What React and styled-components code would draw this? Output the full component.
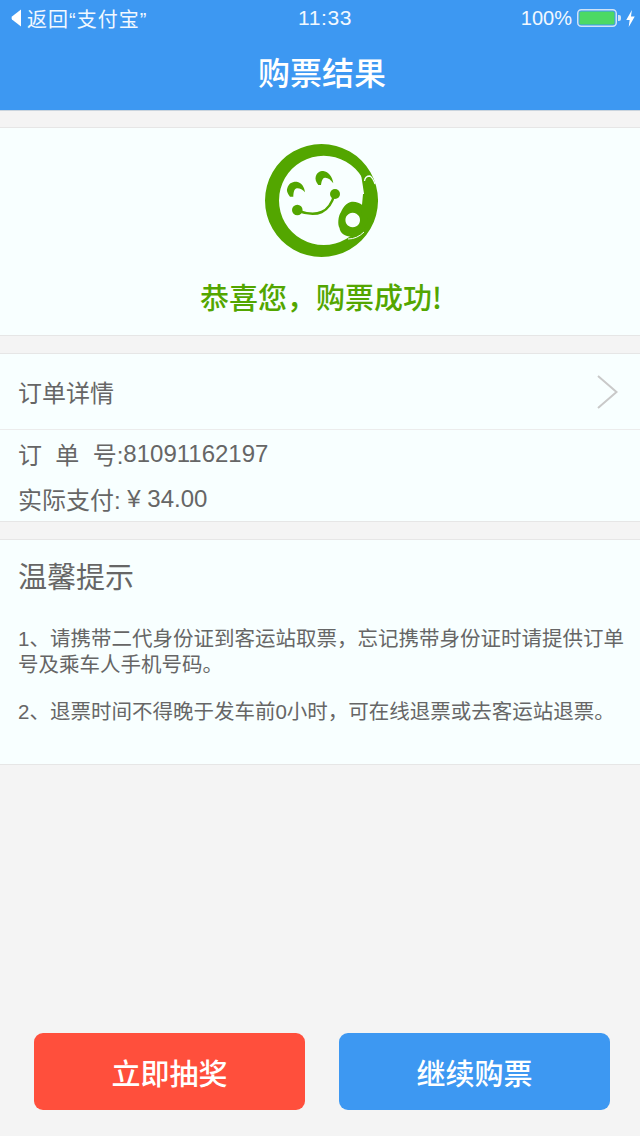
import React from 'react';
import styled, { createGlobalStyle } from 'styled-components';

const GlobalStyle = createGlobalStyle`
  html, body {
    margin: 0;
    padding: 0;
    background: #f4f4f4;
  }
  * {
    box-sizing: border-box;
  }
`;

const FONT = `"Liberation Sans", "Noto Sans CJK SC", sans-serif`;
const CJK_FONT = `"Noto Sans CJK SC", sans-serif`;

const Page = styled.div`
  width: 640px;
  height: 1136px;
  display: flex;
  flex-direction: column;
  background: #f4f4f4;
  font-family: ${FONT};
  overflow: hidden;
`;

const Header = styled.header`
  height: 111px;
  flex: none;
  background: #3d98f2;
  border-bottom: 1px solid #c9d4de;
  color: #fff;
`;

const StatusBar = styled.div`
  height: 36px;
  padding: 0 5px 0 11px;
  display: grid;
  grid-template-columns: 1fr auto 1fr;
  align-items: center;
  color: #f2f8ff;
`;

const BackLink = styled.div`
  display: flex;
  align-items: center;
  gap: 6px;
  font-size: 20px;
  letter-spacing: 1px;
`;

const Clock = styled.div`
  font-size: 21px;
  letter-spacing: 0.6px;
  padding-left: 4px;
`;

const StatusRight = styled.div`
  display: flex;
  align-items: center;
  justify-content: flex-end;
  gap: 5px;
  font-size: 20px;
`;

const Title = styled.h1`
  margin: 0;
  height: 72px;
  display: flex;
  align-items: center;
  justify-content: center;
  font-size: 32px;
  font-weight: 500;
  padding: 0 0 2px 4px;
`;

const Card = styled.section`
  margin-top: ${(p) => p.$gap}px;
  background: #f8ffff;
  border-top: 1px solid #e6e6e6;
  border-bottom: 1px solid #e6e6e6;
`;

const Result = styled(Card)`
  height: 209px;
  display: flex;
  flex-direction: column;
  align-items: center;
  padding: 16px 0 0 2px;
`;

const ResultText = styled.div`
  margin-top: 19px;
  font-family: ${CJK_FONT};
  font-size: 29px;
  line-height: 40px;
  font-weight: 500;
  color: #53a600;
`;

const DetailRow = styled.div`
  height: 76px;
  padding: 0 22px 0 18px;
  display: flex;
  align-items: center;
  justify-content: space-between;
  border-bottom: 1px solid #ececec;
  font-size: 24px;
  color: #666;
`;

const InfoList = styled.div`
  padding-top: 1px;
`;

const InfoLine = styled.div`
  height: 45px;
  padding-left: 18px;
  display: flex;
  align-items: center;
  font-size: 24px;
  color: #666;
`;

const Label = styled.span`
  white-space: pre;
`;

const Tips = styled(Card)`
  height: 226px;
  padding: 0 8px 0 18px;
`;

const TipsTitle = styled.h2`
  margin: 0;
  height: 70px;
  display: flex;
  align-items: center;
  font-size: 29px;
  font-weight: 400;
  color: #666;
`;

const TipList = styled.div`
  margin-top: 16px;
`;

const Tip = styled.p`
  margin: 0 0 21px;
  font-size: 20.5px;
  line-height: 26px;
  color: #666;
`;

const Actions = styled.div`
  margin-top: auto;
  padding: 0 30px 26px 34px;
  display: grid;
  grid-template-columns: 271px 271px;
  column-gap: 34px;
`;

const ActionButton = styled.button`
  height: 77px;
  border: 0;
  border-radius: 9px;
  background: ${(p) => p.$bg};
  color: #fff;
  font-family: ${FONT};
  font-size: 29px;
  font-weight: 500;
`;

const BackArrow = () => (
  <svg width="10" height="18" viewBox="0 0 10 18">
    <path d="M10 0.5 V17.5 L1 10.5 Q0 9 1 7.5 Z" fill="#fff" />
  </svg>
);

const Battery = () => (
  <svg width="44" height="18" viewBox="0 0 44 18">
    <rect x="0.75" y="0.75" width="38.5" height="16.5" rx="3.5" fill="none" stroke="#cfe3f7" strokeWidth="1.5" />
    <rect x="2.5" y="2.5" width="35" height="13" rx="1.5" fill="#4cd964" />
    <path d="M41 6 h1 a2 2 0 0 1 2 2 v2 a2 2 0 0 1 -2 2 h-1 Z" fill="#cfe3f7" />
  </svg>
);

const Bolt = () => (
  <svg width="9" height="17" viewBox="0 0 9 18">
    <path d="M6 0 L0 10.5 H3.6 L2.6 18 L9 6.8 H5 Z" fill="#fff" />
  </svg>
);

const Chevron = () => (
  <svg width="21" height="34" viewBox="0 0 21 34">
    <path d="M1 1 L19.5 17 L1 33" fill="none" stroke="#c9c9c9" strokeWidth="2" />
  </svg>
);

const Logo = () => (
  <svg width="113" height="113" viewBox="0 0 113 113">
    <g fill="#53a600">
      {/* ring, thicker on the left */}
      <path
        fillRule="evenodd"
        d="M56.5 0 a56.5 56.5 0 1 0 0.01 0 Z M58.7 11.7 a44.7 44.7 0 1 0 0.01 0 Z"
      />
      {/* eyes */}
      <path d="M25 52.7 C22 49 21.5 46 22.3 44.3 C23.5 39.5 27 37.5 31.7 37.7 C36.5 38.5 39.5 43 40 48.3 C37.5 45.5 34.5 44 31.7 44.3 C28.5 44.8 28.5 50 28.3 52.7 Z" />
      <path d="M53.3 41 C51 38 50 35 50.7 32.7 C51.5 29 54.5 27 58.3 27 C63.5 27.5 67.5 33 68.3 39.3 C66 36 63 33.5 60 33.7 C57 34 56.5 38 56 41 Z" />
      {/* smile */}
      <circle cx="32.3" cy="66" r="5.3" />
      <circle cx="70" cy="50" r="5" />
      <path d="M33.3 67 Q62 77 69.3 51" fill="none" stroke="#53a600" strokeWidth="2.5" />
      {/* headset */}
      <path
        fillRule="evenodd"
        d="M86.7 57.7 C94 57 101.7 62 102.5 71 C103 82 97 92.7 86.7 92.7 C80 92.7 75 89 74.5 84 C72.5 81 73 72 76 68 C78 63 82 58.5 86.7 57.7 Z M87.7 68.7 a7.3 7.3 0 1 0 0.01 0 Z"
      />
      <path d="M98 50 h8 v22 h-10 Z" />
      <path d="M96 30 L102.5 34 L104 56 L100 56 Z" />
    </g>
    <path d="M99.5 37 Q100 32 105 32 Q108 34 110 40" fill="none" stroke="#f8ffff" strokeWidth="1.3" />
    <path d="M83 95 Q92 95 99 88" fill="none" stroke="#f8ffff" strokeWidth="1" />
  </svg>
);

export default function App() {
  return (
    <>
      <GlobalStyle />
      <Page>
        <Header>
          <StatusBar>
            <BackLink>
              <BackArrow />
              返回“支付宝”
            </BackLink>
            <Clock>11:33</Clock>
            <StatusRight>
              100%
              <Battery />
              <Bolt />
            </StatusRight>
          </StatusBar>
          <Title>购票结果</Title>
        </Header>

        <Result $gap={16}>
          <Logo />
          <ResultText>恭喜您，购票成功!</ResultText>
        </Result>

        <Card $gap={17}>
          <DetailRow>
            订单详情
            <Chevron />
          </DetailRow>
          <InfoList>
            <InfoLine>
              <Label>订  单  号:</Label>81091162197
            </InfoLine>
            <InfoLine>
              <Label>实际支付: </Label>¥ 34.00
            </InfoLine>
          </InfoList>
        </Card>

        <Tips $gap={17}>
          <TipsTitle>温馨提示</TipsTitle>
          <TipList>
            <Tip>1、请携带二代身份证到客运站取票，忘记携带身份证时请提供订单号及乘车人手机号码。</Tip>
            <Tip>2、退票时间不得晚于发车前0小时，可在线退票或去客运站退票。</Tip>
          </TipList>
        </Tips>

        <Actions>
          <ActionButton $bg="#ff4f3c">立即抽奖</ActionButton>
          <ActionButton $bg="#3d98f2">继续购票</ActionButton>
        </Actions>
      </Page>
    </>
  );
}
